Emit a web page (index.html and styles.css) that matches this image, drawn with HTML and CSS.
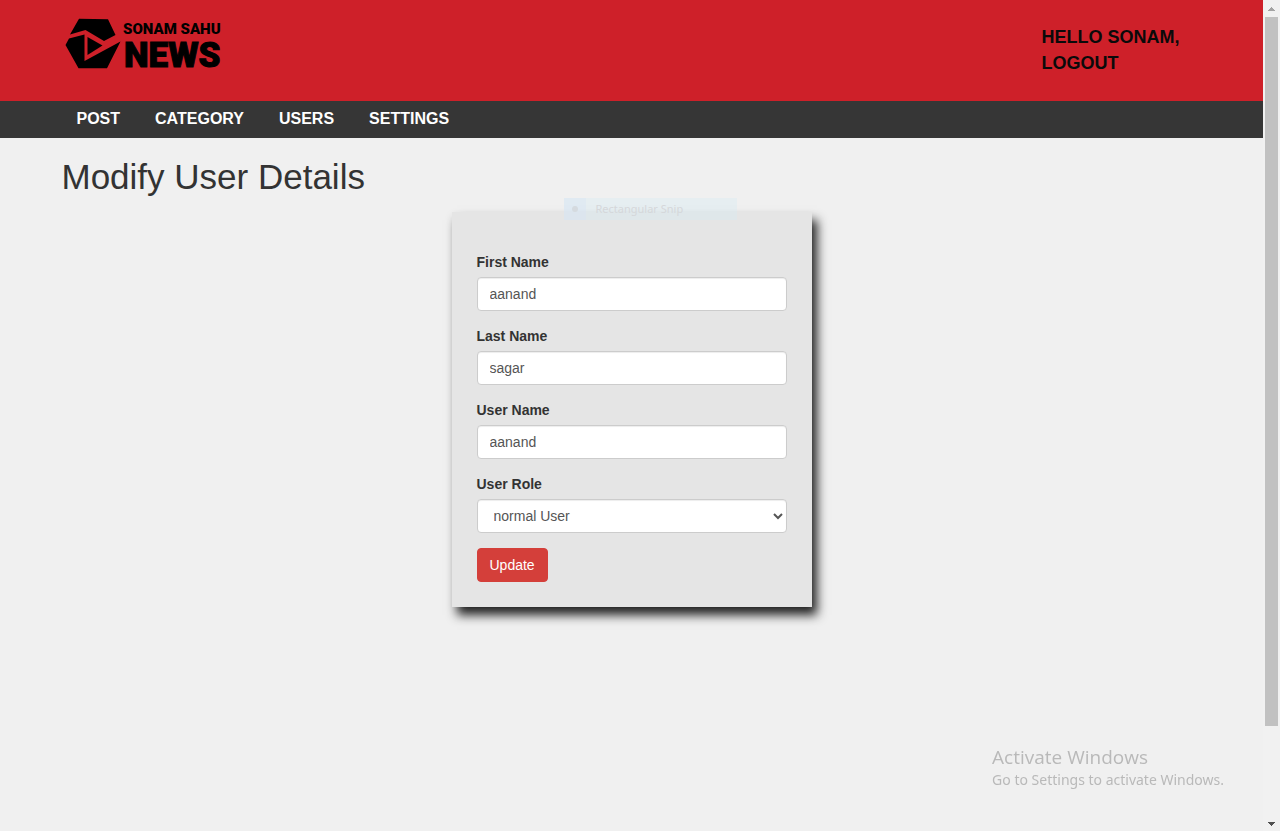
FILE: index.html
```html
<!DOCTYPE html>
<html lang="en">
<head>
<meta charset="utf-8">
<meta name="viewport" content="width=device-width, initial-scale=1">
<title>Modify User Details</title>
<link rel="stylesheet" href="styles.css">
</head>
<body>
<div class="window">
  <div class="page">
    <header class="header">
      <div class="container header-row">
        <a class="logo" href="#" aria-label="Sonam Sahu News">
          <svg width="170" height="68" viewBox="62 13 170 68">
            <path d="M70 34.500 79 18.800 108 19.300 115.500 35 104 41 85.500 30z"/>
            <path d="M65.500 45 69 38.500 84.500 34.500 84.500 61 120.500 41.500 107 68.300 78.500 68.300z"/>
            <path d="M87.500 37 102.500 45.500 87.500 55z"/>
            <text class="logo-small" x="123" y="34">SONAM SAHU</text>
            <text class="logo-large" x="124" y="67">NEWS</text>
          </svg>
        </a>
        <a class="account" href="#">HELLO SONAM,<br>LOGOUT</a>
      </div>
    </header>
    <nav class="menu">
      <div class="container menu-row">
        <a href="#">POST</a>
        <a href="#">CATEGORY</a>
        <a href="#">USERS</a>
        <a href="#">SETTINGS</a>
      </div>
    </nav>
    <main class="container">
      <h1>Modify User Details</h1>
      <form class="card">
        <div class="snip"><span class="snip-icon"></span><span class="snip-text">Rectangular Snip</span></div>
        <div class="field">
          <label for="first">First Name</label>
          <input id="first" type="text" value="aanand">
        </div>
        <div class="field">
          <label for="last">Last Name</label>
          <input id="last" type="text" value="sagar">
        </div>
        <div class="field">
          <label for="user">User Name</label>
          <input id="user" type="text" value="aanand">
        </div>
        <div class="field">
          <label for="role">User Role</label>
          <select id="role"><option>normal User</option><option>Admin</option></select>
        </div>
        <button type="button">Update</button>
      </form>
    </main>
  </div>
  <div class="scrollbar">
    <svg width="17" height="17"><path d="M5 11h7v-1h-1v-1h-1v-1h-1v-1h-1v1h-1v1h-1v1h-1z" fill="#a3a3a3"/></svg>
    <div class="track"><div class="thumb"></div></div>
    <svg width="17" height="17"><path d="M5 8h7v1h-1v1h-1v1h-1v1h-1v-1h-1v-1h-1v-1h-1z" fill="#505050"/></svg>
  </div>
</div>
<div class="watermark">
  <div class="watermark-title">Activate Windows</div>
  <div class="watermark-text">Go to Settings to activate Windows.</div>
</div>
</body>
</html>
```
FILE: styles.css
```css
* { box-sizing: border-box; }
body {
  margin: 0;
  background: #f0f0f0;
  color: #333;
  font: 14px/20px "Liberation Sans", Arial, sans-serif;
}
.window { display: flex; min-height: 100vh; }
.page { flex: 1; min-width: 0; }
.container { max-width: 1170px; margin: 0 auto; padding: 0 15px; }
.header { background: #ce2029; }
.header-row {
  display: flex;
  justify-content: space-between;
  align-items: flex-start;
  padding-top: 13px;
  padding-bottom: 20px;
}
.logo svg { display: block; overflow: visible; }
.logo-small, .logo-large {
  font-family: Roboto, "Liberation Sans", sans-serif;
  font-weight: 900;
  stroke: #000;
}
.logo-small { font-size: 15px; stroke-width: 0; }
.logo-large { font-size: 35px; stroke-width: 1px; }
.account {
  margin-top: 11px;
  width: 160px;
  color: #0a0a0a;
  font-size: 18px;
  font-weight: 700;
  line-height: 26px;
  text-decoration: none;
}
.menu { background: #363636; }
.menu-row { display: flex; gap: 5px; }
.menu a {
  padding: 8px 15px 9px;
  color: #fff;
  font-size: 16px;
  font-weight: 700;
  text-decoration: none;
}
h1 { margin: 19px 0 15px; font-size: 35px; font-weight: 400; line-height: 40px; }
.card {
  position: relative;
  max-width: 360px;
  margin: 0 auto;
  padding: 40px 25px 25px;
  background: #e5e5e5;
  box-shadow: 5px 8px 10px #222;
}
.field { margin-bottom: 15px; }
label { display: block; margin-bottom: 5px; font-weight: 700; }
input, select {
  display: block;
  width: 100%;
  height: 34px;
  padding: 6px 12px;
  border: 1px solid #ccc;
  border-radius: 4px;
  background: #fff;
  box-shadow: inset 0 1px 1px rgba(0, 0, 0, .075);
  color: #555;
  font: inherit;
}
button {
  display: block;
  padding: 6px 12px;
  border: 1px solid #d43f3a;
  border-radius: 4px;
  background: #d43f3a;
  color: #fff;
  font: inherit;
}
.snip {
  position: absolute;
  top: -14px;
  left: 112px;
  display: flex;
  width: 173px;
  height: 22px;
  background: rgba(215, 235, 243, .4);
  color: #d5d7da;
  font: 11px/22px "Noto Sans", sans-serif;
}
.snip-icon { display: grid; place-items: center; width: 22px; background: rgba(215, 228, 245, .4); }
.snip-icon::before { content: ""; width: 6px; height: 6px; border-radius: 50%; background: #d5dadf; }
.snip-text { padding-left: 10px; }
.scrollbar {
  position: sticky;
  top: 0;
  display: flex;
  flex-direction: column;
  width: 17px;
  height: 100vh;
  background: #f1f1f1;
}
.scrollbar svg { display: block; }
.track { flex: 1; padding: 0 2px; }
.thumb { height: 89%; background: #c1c1c1; }
.watermark {
  position: fixed;
  right: 56px;
  bottom: 40px;
  color: #b9b9b9;
  font-family: "Open Sans", sans-serif;
}
.watermark-title { font-size: 19px; line-height: 24px; }
.watermark-text { font-family: "Noto Sans", sans-serif; font-size: 14px; line-height: 22px; }
```
